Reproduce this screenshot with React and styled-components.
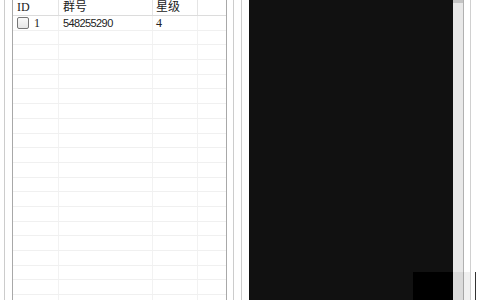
import React from 'react';
import styled, { createGlobalStyle } from 'styled-components';

const GlobalStyle = createGlobalStyle`
  html, body {
    margin: 0;
    padding: 0;
    background: #fff;
    overflow: hidden;
  }
  body {
    font-family: "Liberation Sans", "Noto Sans CJK SC", sans-serif;
    font-size: 12px;
    color: #222;
  }
`;

const Window = styled.div`
  position: relative;
  width: 480px;
  height: 300px;
  display: flex;
  overflow: hidden;
  background: #fff;
`;

const Rule = styled.div`
  width: 1px;
  flex: none;
  margin-left: ${props => props.gap || 0}px;
  background: ${props => props.color || '#cfcfcf'};
`;

const TablePanel = styled.div`
  width: 213px;
  flex: none;
  margin-left: 7px;
  border-left: 1px solid #a8a8a8;
  border-right: 1px solid #a8a8a8;
  display: flex;
  flex-direction: column;
`;

const Row = styled.div`
  display: flex;
  flex: none;
  height: ${props => (props.head ? 16 : 14.7)}px;
  border-bottom: 1px solid ${props => (props.head ? '#dcdcdc' : '#f0f0f0')};
  box-sizing: border-box;
`;

const Cell = styled.div`
  width: ${props => props.w}px;
  flex: ${props => (props.w ? 'none' : 1)};
  box-sizing: border-box;
  padding-left: ${props => props.pad ?? 4}px;
  padding-top: ${props => (props.head ? 0 : 1)}px;
  border-right: ${props => (props.last ? 'none' : `1px solid ${props.head ? '#e4e4e4' : '#f2f2f2'}`)};
  display: flex;
  align-items: center;
  gap: 5px;
  white-space: nowrap;
  overflow: hidden;
  line-height: 13px;
  font-size: ${props => (props.narrow ? 11 : 12)}px;
  letter-spacing: ${props => (props.narrow ? -0.6 : 0)}px;
  font-family: ${props => (props.serif ? '"Liberation Serif", "Noto Sans CJK SC", serif' : 'inherit')};
`;

const Check = styled.span`
  width: 10px;
  height: 10px;
  border: 1px solid #777;
  border-radius: 2px;
  background: linear-gradient(#fafafa, #e6e6e6);
  flex: none;
`;

const Screen = styled.div`
  width: 204px;
  flex: none;
  margin-left: 7px;
  background: #111;
`;

const ScrollTrack = styled.div`
  width: 10px;
  flex: none;
  background: #e8e8e8;
  border-top: 3px solid #c4c4c4;
  box-sizing: border-box;
`;

const Corner = styled.div`
  position: absolute;
  left: 413px;
  top: 272px;
  width: 40px;
  height: 28px;
  background: #000;
`;

const CornerShade = styled.div`
  position: absolute;
  left: 453px;
  top: 272px;
  width: 17px;
  height: 28px;
  background: rgba(0, 0, 0, 0.06);
`;

const CornerEdge = styled.div`
  position: absolute;
  left: 475px;
  top: 272px;
  width: 1px;
  height: 28px;
  background: #333;
`;

const columns = [46, 94, 45, null];

function TableRow({ head, cells }) {
  return (
    <Row head={head}>
      {columns.map((w, i) => (
        <Cell
          key={i}
          w={w}
          head={head}
          last={i === columns.length - 1}
          pad={i === 2 ? 3 : 4}
          serif={i === 0 || (i === 2 && !head)}
          narrow={!head && i === 1}
        >
          {cells[i]}
        </Cell>
      ))}
    </Row>
  );
}

export default function App() {
  const empty = Array.from({ length: 19 });
  return (
    <>
      <GlobalStyle />
      <Window>
        <Rule gap={4} color="#cccccc" />
        <TablePanel>
          <TableRow head cells={['ID', '群号', '星级', '']} />
          <TableRow
            cells={[
              <>
                <Check />
                1
              </>,
              '548255290',
              '4',
              '',
            ]}
          />
          {empty.map((_, i) => (
            <TableRow key={i} cells={['', '', '', '']} />
          ))}
        </TablePanel>
        <Rule gap={6} color="#cccccc" />
        <Rule gap={7} color="#cccccc" />
        <Screen />
        <ScrollTrack />
        <Rule color="#b0b0b0" />
        <Rule gap={6} color="#d0d0d0" />
        <Corner />
        <CornerShade />
        <CornerEdge />
      </Window>
    </>
  );
}
